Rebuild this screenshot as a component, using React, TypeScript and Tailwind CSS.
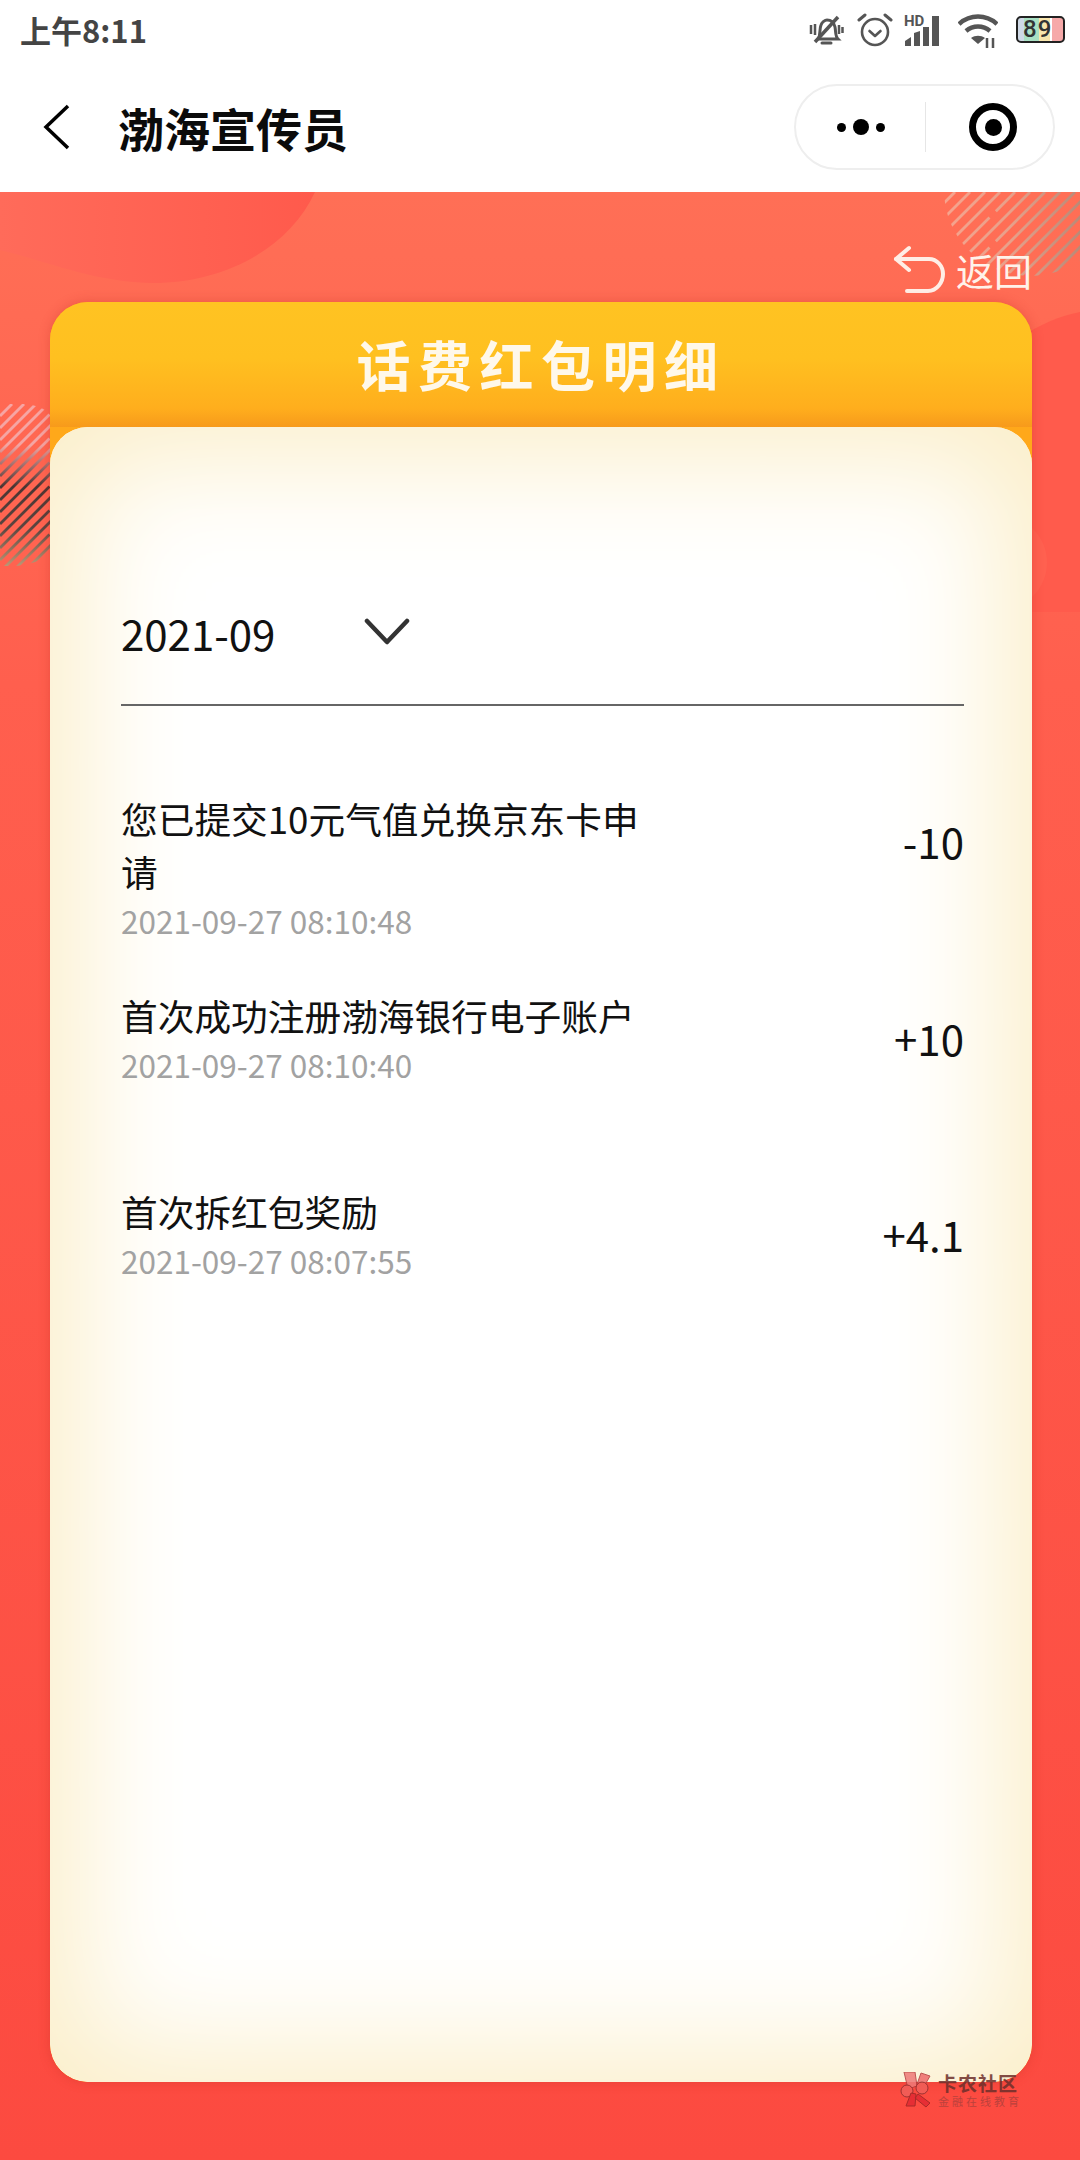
const records = [
  { title: "您已提交10元气值兑换京东卡申请", time: "2021-09-27 08:10:48", amount: "-10" },
  { title: "首次成功注册渤海银行电子账户", time: "2021-09-27 08:10:40", amount: "+10" },
  { title: "首次拆红包奖励", time: "2021-09-27 08:07:55", amount: "+4.1" },
];

const cjk = "font-['Noto_Sans_CJK_SC','Noto_Sans',sans-serif]";

function StatusIcons() {
  return (
    <div className="flex items-center">
      {/* muted bell */}
      <svg width="36" height="36" viewBox="0 0 36 36" fill="none" stroke="#555" strokeWidth="3">
        <path d="M10 27c3-4 1-9 3-14 1-3 4-5 6-5 4 0 7 3 8 7 1 5 0 9 3 12z" />
        <path d="M14 31h9" strokeLinecap="round" />
        <path d="M7 30 30 5" strokeWidth="3.500" />
        <path d="M3 13v9M7 12v11M31 13v9M34.500 15v6" strokeWidth="2.500" />
      </svg>
      {/* alarm clock */}
      <svg width="36" height="36" viewBox="0 0 36 36" fill="none" stroke="#555" strokeWidth="2.600" className="ml-[13px]">
        <circle cx="18" cy="20" r="13" />
        <path d="M12.500 19l5.500 5 5.500-5" strokeLinecap="round" strokeLinejoin="round" />
        <path d="M2 8l6-5M34 8l-6-5" strokeLinecap="round" strokeWidth="3" />
      </svg>
      {/* signal bars with HD tag */}
      <svg width="38" height="34" viewBox="0 0 38 34" className="ml-[11px]">
        <text x="0" y="13" fontSize="15" fontWeight="700" fill="#555" fontFamily="Roboto, sans-serif">HD</text>
        <path d="M1 33v-5l6-4v9zM10 33V20l6-2v15zM19 33V14h6v19zM28 33V3h7v30z" fill="#555" />
      </svg>
      {/* wifi with activity arrows */}
      <svg width="40" height="36" viewBox="0 0 40 36" fill="none" stroke="#555" strokeWidth="4.500" className="ml-[16px]">
        <path d="M1 12c11-10 27-10 38 0" />
        <path d="M8 19c7-6 17-6 24 0" />
        <path d="M20 32l-7-6c4-3 10-3 14 0z" fill="#555" stroke="none" />
        <path d="M29 26v10M35 26v10" strokeWidth="2.500" />
      </svg>
      {/* battery level */}
      <div className="relative ml-[18px] flex h-[27px] w-[49px] items-center overflow-hidden rounded-[5px] border-2 border-[#222] bg-[linear-gradient(90deg,#cfd9e6_0_14%,#a9e0c4_14%_46%,#f9e6ad_46%_72%,#fff_72%_76%,#f6a9a9_76%)]">
        <span className="pl-[5px] font-['Roboto',sans-serif] text-[24px] leading-[23px] font-medium tracking-[1px] text-[#333]">89</span>
      </div>
    </div>
  );
}

// Diagonal stripes clipped to a round patch, coloured along a gradient.
function Hatch({
  id, width, height, step, clip, stops, horizontal, className,
}: {
  id: string;
  width: number;
  height: number;
  step: number;
  clip: { cx: number; cy: number; r: number };
  stops: string[];
  horizontal: boolean;
  className: string;
}) {
  const count = Math.ceil((width + height) / step);
  return (
    <svg className={className} width={width} height={height} viewBox={`0 0 ${width} ${height}`} fill="none">
      <defs>
        <linearGradient id={`${id}-g`} gradientUnits="userSpaceOnUse" x1="0" y1="0" x2={horizontal ? width : 0} y2={horizontal ? 0 : height}>
          {stops.map((c, i) => (
            <stop key={i} offset={i / (stops.length - 1)} stopColor={c} />
          ))}
        </linearGradient>
        <clipPath id={`${id}-c`}>
          <circle cx={clip.cx} cy={clip.cy} r={clip.r} />
        </clipPath>
      </defs>
      <g clipPath={`url(#${id}-c)`} stroke={`url(#${id}-g)`} strokeWidth="2.800">
        {Array.from({ length: count }).map((_, i) => (
          <line key={i} x1={0} y1={i * step} x2={i * step} y2={0} strokeDasharray={i % 2 ? "70 9 300" : undefined} />
        ))}
      </g>
    </svg>
  );
}

function Watermark() {
  return (
    <div className="absolute top-[2072px] left-[899px] flex items-center opacity-85">
      <svg width="38" height="36" viewBox="0 0 38 36">
        <path d="M5 0h11l2 14-9 3z" fill="#ee7a78" stroke="#b43b3b" />
        <path d="M22 1l9 3-8 14-6-3z" fill="#ef6b6b" stroke="#b43b3b" />
        <circle cx="8" cy="19" r="6" fill="#f0605a" stroke="#8c2f2f" />
        <circle cx="23" cy="16" r="6" fill="#f0605a" stroke="#8c2f2f" />
        <path d="M7 34l5-13 5 1-1 12zM19 22l12 9-4 4-11-9z" fill="#e32a33" stroke="#9c2525" />
      </svg>
      <div className={`${cjk} ml-[1px] flex flex-col`}>
        <span className="text-[19px] leading-[22px] font-bold tracking-[1px] text-[#6d2f2b]">卡农社区</span>
        <span className="text-[11px] leading-[14px] tracking-[3px] text-[#b0403c]">金融在线教育</span>
      </div>
    </div>
  );
}

export default function App() {
  return (
    <div className={`${cjk} relative h-[2160px] w-[1080px] overflow-hidden bg-white`}>
      {/* status bar */}
      <div className="flex h-[62px] items-center justify-between pr-[15px] pb-[3px] pl-[20px]">
        <span className="text-[31px] leading-none font-semibold text-[#444]">上午8:11</span>
        <StatusIcons />
      </div>

      {/* mini program title bar */}
      <div className="flex h-[130px] items-center">
        <svg width="30" height="46" viewBox="0 0 30 46" fill="none" stroke="#000" strokeWidth="3.500" className="ml-[43px]">
          <path d="M25 2 3 23l22 21" />
        </svg>
        <h1 className="ml-[45px] text-[46px] leading-none font-bold text-[#0b0b0b]">渤海宣传员</h1>
        <div className="mr-[25px] ml-auto flex h-[86px] w-[261px] items-center rounded-full border-2 border-[#eeeeee]">
          <div className="flex w-[129px] items-center justify-center gap-[7px]">
            <span className="h-[9px] w-[9px] rounded-full bg-black" />
            <span className="h-[16px] w-[16px] rounded-full bg-black" />
            <span className="h-[9px] w-[9px] rounded-full bg-black" />
          </div>
          <div className="h-[50px] w-[1px] bg-[#e6e6e6]" />
          <div className="flex flex-1 items-center justify-center pl-[7px]">
            <div className="flex h-[48px] w-[48px] items-center justify-center rounded-full border-[7px] border-black">
              <span className="h-[17px] w-[17px] rounded-full bg-black" />
            </div>
          </div>
        </div>
      </div>

      {/* red page */}
      <div className="relative h-[1968px] overflow-hidden bg-[linear-gradient(180deg,#ff6f56_0%,#ff5f4e_25%,#fc4a40_100%)]">
        <svg className="absolute top-0 left-0" width="330" height="100" viewBox="0 0 330 100">
          <defs>
            <linearGradient id="corner-blob" x1="0" y1="0" x2="1" y2="0">
              <stop offset="0" stopColor="#ff6b5a" />
              <stop offset="1" stopColor="#ff5a4c" />
            </linearGradient>
          </defs>
          <path d="M0 0H315C290 55 225 92 150 91C90 89 50 70 0 58Z" fill="url(#corner-blob)" />
        </svg>
        <svg className="absolute top-[120px] right-0" width="60" height="300" viewBox="0 0 60 300">
          <path d="M60 0C40 4 20 12 0 26V300H60Z" fill="#ff5b4c" />
        </svg>
        <div className="absolute top-[323px] right-[33px] h-[95px] w-[95px] rounded-full bg-[#ff6150]" />
        <Hatch
          id="hatch-top"
          width={140}
          height={90}
          step={15}
          clip={{ cx: 90, cy: -2, r: 86 }}
          stops={["#f7a48e", "#e8a08a", "#b98a78"]}
          horizontal
          className="absolute top-0 right-0"
        />
        <Hatch
          id="hatch-side"
          width={60}
          height={165}
          step={12}
          clip={{ cx: 10, cy: 80, r: 82 }}
          stops={["#f7a5a3", "#f4a5a3", "#4a3532", "#5a4540", "#c49c78"]}
          horizontal={false}
          className="absolute top-[212px] left-0"
        />

        <div className="relative flex h-[110px] items-center justify-end pt-[46px] pr-[48px]">
          <svg width="54" height="50" viewBox="0 0 54 50" fill="none" stroke="#ffeee6" strokeWidth="4" strokeLinecap="round" strokeLinejoin="round">
            <path d="M16 3 3 14l13 11" />
            <path d="M3 14h33c8 0 14 7 14 15s-6 17-15 17H14" />
          </svg>
          <span className="ml-[9px] text-[38px] leading-none font-normal text-[#fff2ea]">返回</span>
        </div>

        {/* detail card */}
        <div className="relative mr-[48px] ml-[50px] overflow-hidden rounded-[38px] bg-[#ffa81a] shadow-[0_0_12px_rgba(190,40,30,0.3)]">
          <div className="flex h-[125px] items-center justify-center bg-[linear-gradient(180deg,#ffc322_0%,#ffc020_45%,#ffae1d_85%,#f79a1b_100%)] pb-[2px]">
            <h2 className="text-[54px] leading-none font-bold tracking-[7.500px] text-[#fff8ea]">话费红包明细</h2>
          </div>
          <div className="h-[1655px] rounded-[38px] bg-white pr-[68px] pl-[71px] shadow-[inset_0_0_120px_30px_#fbeec8]">
            <div className="flex h-[279px] items-end border-b-2 border-[#666]">
              <div className="flex items-center pb-[46px]">
                <span className="text-[42px] leading-[50px] text-[#111]">2021-09</span>
                <svg width="46" height="28" viewBox="0 0 46 28" fill="none" stroke="#333" strokeWidth="4.500" strokeLinecap="round" strokeLinejoin="round" className="mb-[2px] ml-[89px]">
                  <path d="M3 3l20 21L43 3" />
                </svg>
              </div>
            </div>
            <div className="mt-[86px]">
              {records.map((item) => (
                <div key={item.time} className="flex h-[196.500px] justify-between">
                  <div className="w-[540px]">
                    <p className="text-[36.700px] leading-[53px] text-[#111]">{item.title}</p>
                    <p className="text-[31.500px] leading-[44px] text-[#a2a2a2]">{item.time}</p>
                  </div>
                  <span className="text-[42px] leading-[98px] text-[#111]">{item.amount}</span>
                </div>
              ))}
            </div>
          </div>
        </div>
      </div>

      <Watermark />
    </div>
  );
}
